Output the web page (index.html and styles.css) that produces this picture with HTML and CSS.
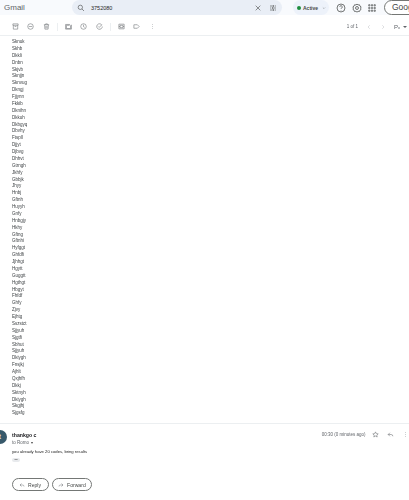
FILE: index.html
```html
<!DOCTYPE html>
<html lang="en">
<head>
<meta charset="utf-8">
<title>Gmail</title>
<link rel="stylesheet" href="styles.css">
</head>
<body>
<div class="app">
  <header class="top">
    <div class="brand">Gmail</div>
    <div class="search">
      <svg class="ic9" viewBox="0 0 24 24"><circle cx="10" cy="10" r="6.5"/><path d="M15 15l6 6"/></svg>
      <span class="query">3752080</span>
      <svg class="ic9 close" viewBox="0 0 24 24"><path d="M5 5l14 14M19 5L5 19"/></svg>
      <svg class="ic9 tune" viewBox="0 0 24 24"><path d="M3 6h11M18 6h3M3 12h3M10 12h11M3 18h11M18 18h3M14 3v6M10 9v6M14 15v6"/></svg>
    </div>
    <div class="active"><span class="dot"></span><span>Active</span>
      <svg class="chev" viewBox="0 0 24 24"><path d="M5 9l7 7 7-7"/></svg></div>
    <div class="actions">
      <svg class="ic10" viewBox="0 0 24 24"><circle cx="12" cy="12" r="9.5"/><path d="M9 9.5a3 3 0 1 1 4.5 2.6c-1 .6-1.5 1.2-1.5 2.4M12 17v1"/></svg>
      <svg class="ic10" viewBox="0 0 24 24"><circle cx="12" cy="12" r="3.5"/><path d="M12 2.5l2.5 2.2 3.3-.5 1.2 3.1 2.7 1.9-1 3.1 1 3.1-2.7 1.9-1.2 3.1-3.300-.5-2.500 2.200-2.500-2.200-3.300.5-1.200-3.100-2.700-1.900 1-3.100-1-3.100 2.700-1.900 1.200-3.100 3.300.5z"/></svg>
      <svg class="ic10 grid" viewBox="0 0 24 24"><path d="M4 4h3v3H4zM10.500 4h3v3h-3zM17 4h3v3h-3zM4 10.500h3v3H4zM10.500 10.500h3v3h-3zM17 10.500h3v3h-3zM4 17h3v3H4zM10.500 17h3v3h-3zM17 17h3v3h-3z"/></svg>
    </div>
    <div class="account">Google</div>
  </header>

  <nav class="tools">
    <svg class="ic7" viewBox="0 0 24 24"><path d="M3 3h18v5H3zM4.500 8v13h15V8M9 12h6"/></svg>
    <svg class="ic7" viewBox="0 0 24 24"><circle cx="12" cy="12" r="9.500"/><path d="M6 12h12"/></svg>
    <svg class="ic7" viewBox="0 0 24 24"><path d="M3 6h18M9 6V3h6v3M5.500 6l1 15h11l1-15M10 10v8M14 10v8"/></svg>
    <span class="sep"></span>
    <svg class="ic7" viewBox="0 0 24 24"><path d="M3 5h13l-1 3H5v11h14V9l3-2v14H2V5z"/></svg>
    <svg class="ic7" viewBox="0 0 24 24"><circle cx="12" cy="12" r="9.500"/><path d="M12 6v6.500l4 2.500"/></svg>
    <svg class="ic7" viewBox="0 0 24 24"><path d="M20 7a9.500 9.500 0 1 0 1.500 5M8 12l3 3 9-9"/></svg>
    <span class="sep"></span>
    <svg class="ic7" viewBox="0 0 24 24"><path d="M3 4h18v16H3zM7 8h10v8H7zM3 12h4M17 12h4"/></svg>
    <svg class="ic7" viewBox="0 0 24 24"><path d="M3 6h12l6 6-6 6H3z"/></svg>
    <svg class="ic7 more" viewBox="0 0 24 24"><path d="M12 4v2M12 11v2M12 18v2"/></svg>
    <div class="pager">
      <span class="count">1 of 1</span>
      <svg class="ic6 dim" viewBox="0 0 24 24"><path d="M15 5l-7 7 7 7"/></svg>
      <svg class="ic6 dim" viewBox="0 0 24 24"><path d="M9 5l7 7-7 7"/></svg>
      <span class="lang">Pₓ</span>
      <span class="caret"></span>
    </div>
  </nav>

  <main class="body-list">
    <div>Sknuk</div><div>Skhb</div><div>Dkkli</div><div>Dnbn</div><div>Skjvb</div>
    <div>Sknjjn</div><div>Sknvug</div><div>Dkngj</div><div>Fjjynn</div><div>Fkkib</div>
    <div>Dknihn</div><div>Dkkuh</div><div>Dkbgyq</div><div>Dbvhy</div><div>Ftspll</div>
    <div>Djjyt</div><div>Djbvg</div><div>Dhhvt</div><div>Gtrngh</div><div>Jkhfy</div>
    <div>Gbbjk</div><div>Jhyy</div><div>Hnbj</div><div>Gftnh</div><div>Huyyh</div>
    <div>Gnfy</div><div>Hnbgjy</div><div>Hkhy</div><div>Gftng</div><div>Gftnhi</div>
    <div>Hyfggt</div><div>Ghfdfi</div><div>Jjhhgt</div><div>Hgytt</div><div>Guggtt</div>
    <div>Hgthgt</div><div>Hbgyt</div><div>Fhfdf</div><div>Ghfy</div><div>Zjvy</div>
    <div>Ejhtg</div><div>Sszstct</div><div>Sjjyuh</div><div>Sjgtfi</div><div>Sbhut</div>
    <div>Sjjyuh</div><div>Dkiygh</div><div>Fnsjkj</div><div>Ajhlt</div><div>Qxjhfh</div>
    <div>Dkkj</div><div>Sktnyh</div><div>Dkiygh</div><div>Skgjhj</div><div>Sjgsfg</div>
  </main>

  <section class="reply">
    <div class="avatar">t</div>
    <div class="content">
      <div class="meta">
        <div class="sender">thankgo c</div>
        <div class="time">00:30 (0 minutes ago)</div>
        <svg class="ic7 star" viewBox="0 0 24 24"><path d="M12 3l2.800 6 6.500.7-4.900 4.400 1.400 6.500L12 17.300 6.200 20.600l1.400-6.500L2.700 9.700 9.200 9z"/></svg>
        <svg class="ic7" viewBox="0 0 24 24"><path d="M10 6l-6 6 6 6M4 12h10a6 6 0 0 1 6 6"/></svg>
        <svg class="ic7 more" viewBox="0 0 24 24"><path d="M12 4v2M12 11v2M12 18v2"/></svg>
      </div>
      <div class="to">to Romo <span class="to-caret"></span></div>
      <p class="msg">you already have 20 codes, bring results</p>
      <div class="trim">•••</div>
      <div class="buttons">
        <button class="btn"><svg class="ic6" viewBox="0 0 24 24"><path d="M10 6l-6 6 6 6M4 12h10a6 6 0 0 1 6 6"/></svg>Reply</button>
        <button class="btn btn-forward"><svg class="ic6" viewBox="0 0 24 24"><path d="M14 6l6 6-6 6M20 12H10a6 6 0 0 0-6 6"/></svg>Forward</button>
      </div>
    </div>
  </section>
</div>
</body>
</html>
```

FILE: styles.css
```css
* { box-sizing: border-box; }
html, body { margin: 0; padding: 0; background: #fff; }
body { font-family: "Liberation Sans", Arial, sans-serif; color: #202124; }
.app { width: 409px; height: 500px; overflow: hidden; display: flex; flex-direction: column; filter: blur(0.3px); }

svg { fill: none; stroke: currentColor; stroke-width: 1.800; flex: none; display: block; }
.ic10 { width: 10px; height: 10px; color: #444746; }
.ic9 { width: 8px; height: 8px; color: #444746; }
.ic7 { width: 7px; height: 7px; color: #5f6368; }
.ic6 { width: 6px; height: 6px; color: #5f6368; }
.dim { color: #b5b8bb; }

.top { height: 15px; flex: none; display: flex; align-items: center; background: #f8fafd; overflow: hidden; }
.brand { width: 72px; padding-left: 4px; font-size: 8px; color: #5f6368; flex: none; }
.search { width: 210px; height: 15px; flex: none; display: flex; align-items: center; padding: 0 5px; background: #e9eef6; border-radius: 8px; }
.query { font-size: 5.500px; margin-left: 6px; color: #1f1f1f; }
.close { margin-left: auto; }
.tune { margin-left: 7px; }
.active { width: 36px; height: 15px; margin-left: 11px; flex: none; display: flex; align-items: center; gap: 2px; padding-left: 4px; background: #edf2fa; border-radius: 8px; font-size: 5px; font-weight: bold; color: #444746; }
.dot { width: 4px; height: 4px; border-radius: 50%; background: #1e8e3e; flex: none; }
.chev { width: 4px; height: 4px; margin-left: 2px; }
.actions { display: flex; align-items: center; gap: 5.500px; margin-left: 7px; flex: none; }
.grid { stroke-width: 1.500; }
.account { width: 60px; height: 15px; flex: none; margin-left: 7px; padding-left: 7px; border: 1px solid #747775; border-radius: 8px; font-size: 8.500px; line-height: 13px; color: #444746; background: #fff; }

.tools { height: 21px; flex: none; display: flex; align-items: center; gap: 8.500px; padding: 3px 2px 0 11.500px; border-bottom: 1px solid #eceff1; }
.sep { width: 1px; height: 8px; background: #eceff1; margin: 0 -1.500px; }
.pager { margin-left: auto; display: flex; align-items: center; gap: 8px; }
.count { font-size: 4.500px; color: #5f6368; }
.lang { font-size: 6px; color: #5f6368; }
.caret { width: 0; height: 0; margin-left: -5px; border: 2px solid transparent; border-top: 2px solid #5f6368; border-bottom: 0; }

.body-list { padding: 3px 0 0 12px; flex: none; height: 388px; font-size: 4.500px; line-height: 6.870px; color: #3c4043; border-bottom: 1px solid #eceff1; }

.reply { flex: 1; display: flex; padding-left: 12px; position: relative; }
.avatar { position: absolute; left: -7px; top: 6px; width: 14px; height: 14px; border-radius: 50%; background: #37596b; color: #fff; font-size: 7px; text-align: center; line-height: 14px; }
.content { flex: 1; min-width: 0; padding-top: 7px; }
.meta { display: flex; align-items: center; height: 7px; padding-right: 0.500px; gap: 8px; }
.sender { font-size: 5.200px; font-weight: bold; margin-right: auto; }
.time { font-size: 4.500px; color: #5f6368; margin-right: -2px; }
.to { font-size: 4.500px; color: #5f6368; margin-top: 1px; line-height: 7px; display: flex; align-items: center; gap: 2px; }
.to-caret { width: 0; height: 0; border: 1.500px solid transparent; border-top: 2px solid #444; border-bottom: 0; }
.msg { margin: 3px 0 0; font-size: 4.200px; line-height: 6px; color: #222; }
.trim { width: 8px; height: 4px; margin-top: 3px; background: #e8eaed; border-radius: 2px; font-size: 3px; line-height: 4px; text-align: center; color: #444; }
.buttons { display: flex; gap: 3px; margin-top: 16px; }
.btn { height: 13px; padding: 0 7px 0 6px; display: flex; align-items: center; gap: 3px; background: #fff; border: 1px solid #747775; border-radius: 7px; font: 5.100px "Liberation Sans", Arial, sans-serif; color: #444746; }
.btn-forward { padding: 0 5px; }
```
